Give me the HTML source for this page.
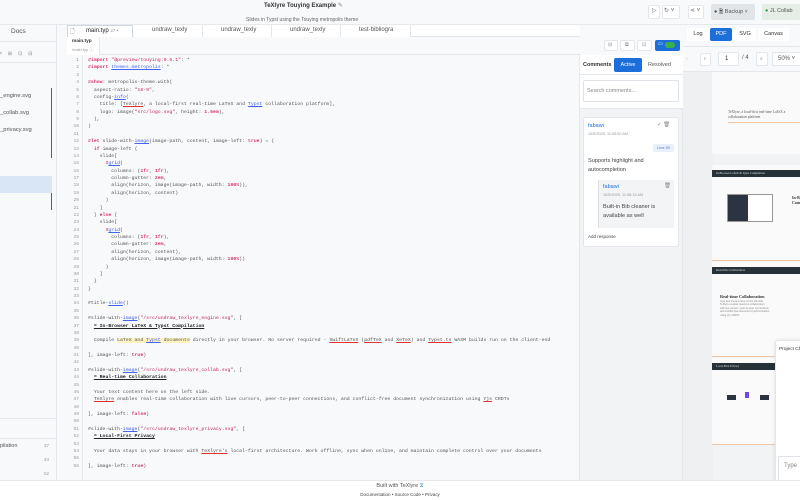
<!DOCTYPE html>
<html><head><meta charset="utf-8"><style>
*{box-sizing:border-box;margin:0;padding:0}
body{width:800px;height:500px;overflow:hidden;background:#f8f9fa;font-family:"Liberation Sans",sans-serif;color:#333;position:relative}
.a{position:absolute}
.code{font-family:"Liberation Mono",monospace;font-size:4.85px;color:#555;white-space:pre;line-height:7.38px}
.k{color:#d6336c;font-weight:bold}.s{color:#c2255c}.f{color:#4263eb;text-decoration:underline}.u{text-decoration:underline #e03131}
.h{color:#222;font-weight:bold;text-decoration:underline}
.ln{font-family:"Liberation Mono",monospace;font-size:4.6px;color:#999;line-height:7.38px;text-align:right;white-space:pre}
.btn{position:absolute;border:1px solid #e3e6ea;background:#fff;border-radius:2px}
.tab{position:absolute;top:25px;height:12px;font-size:6px;color:#555;border-right:1px solid #e3e6ea;padding:2px 0 0 18px;background:#fff}
.pg{position:absolute;left:712px;width:90px;background:#fafafa}
.bar{position:absolute;left:0;width:90px;height:7px;background:#263238}
.ic{position:absolute;font-size:5px;color:#888}
</style></head><body>
<div class="a" style="left:0;top:0;width:800px;height:25px;background:#f8f9fa;border-bottom:1px solid #e6e8eb"></div>
<div class="a" style="left:264px;top:2px;font-size:6px;font-weight:bold;color:#333">TeXlyre Touying Example <span style="color:#888;font-weight:normal">✎</span></div>
<div class="a" style="left:246px;top:17px;font-size:5px;color:#666">Slides in Typst using the Touying metropolis theme</div>
<div class="btn" style="left:648px;top:5px;width:12px;height:14px"></div>
<div class="a" style="left:652px;top:7px;font-size:6px;color:#666">▷</div>
<div class="btn" style="left:662px;top:5px;width:18px;height:14px"></div>
<div class="a" style="left:664px;top:7px;font-size:6px;color:#666">↻ ˅</div>
<div class="btn" style="left:688px;top:5px;width:16px;height:14px"></div>
<div class="a" style="left:690px;top:7px;font-size:6px;color:#666">⋖ ˅</div>
<div class="a" style="left:711px;top:4px;width:44px;height:16px;background:#e2e5e8;border-radius:2px;font-size:5.5px;color:#555;padding:4px 0 0 3px">● 🗎 Backup ˅</div>
<div class="a" style="left:762px;top:4px;width:40px;height:16px;background:#e4ede6;border-radius:2px;font-size:5.5px;color:#555;padding:4px 0 0 3px"><span style="color:#2f9e44">●</span> JL Collab</div>
<div class="a" style="left:0;top:25px;width:57px;height:455px;background:#f8f9fa;border-right:1px solid #e3e6ea"></div>
<div class="a" style="left:11px;top:28px;font-size:6.5px;color:#555">Docs</div>
<div class="a" style="left:0;top:41px;width:57px;border-top:1px solid #e3e6ea"></div>
<div class="a" style="left:0;top:51px;font-size:5px;color:#888;letter-spacing:6px">ᵇ⊞⊡⊟</div>
<div class="a" style="left:0;top:62px;width:57px;border-top:1px solid #e3e6ea"></div>
<div class="a" style="left:0;top:93px;font-size:5.8px;color:#555">_engine.svg</div>
<div class="a" style="left:0;top:110px;font-size:5.8px;color:#555">_collab.svg</div>
<div class="a" style="left:0;top:127px;font-size:5.8px;color:#555">_privacy.svg</div>
<div class="a" style="left:51px;top:88px;width:1px;height:70px;background:#3b5bdb"></div>
<div class="a" style="left:0;top:176px;width:52px;height:17px;background:#d8e6f5"></div>
<div class="a" style="left:51px;top:193px;width:1px;height:17px;background:#3b5bdb"></div>
<div class="a" style="left:0;top:418px;width:57px;border-top:1px solid #e3e6ea"></div>
<div class="a" style="left:0;top:438px;width:57px;border-top:1px solid #e3e6ea"></div>
<div class="a" style="left:0;top:443px;font-size:5.5px;color:#555">pilation</div>
<div class="a" style="left:44px;top:443px;font-size:4.5px;color:#999">37</div>
<div class="a" style="left:44px;top:457px;font-size:4.5px;color:#999">44</div>
<div class="a" style="left:44px;top:471px;font-size:4.5px;color:#999">52</div>
<div class="a" style="left:67px;top:25px;width:513px;height:12px;background:#fff;border-bottom:1px solid #e3e6ea"></div>
<div class="tab" style="left:67px;width:66px;border:1px solid #cfd8e3;border-bottom:none;color:#222">main.typ <span style="color:#999;font-size:4.5px">27 •</span></div>
<div class="tab" style="left:134px;width:69px">undraw_texly</div>
<div class="tab" style="left:203px;width:69px">undraw_texly</div>
<div class="tab" style="left:272px;width:69px">undraw_texly</div>
<div class="tab" style="left:341px;width:70px">test-bibliogra</div>
<div class="a" style="left:70px;top:27px;font-size:6px;color:#777">🗋</div>
<div class="a" style="left:67px;top:37px;width:513px;height:18px;background:#f8f9fa;border-bottom:1px solid #e3e6ea"></div>
<div class="a" style="left:67px;top:37px;width:33px;height:18px;background:#fff;border-right:1px solid #e3e6ea"></div>
<div class="a" style="left:72px;top:39px;font-size:4.8px;font-weight:bold;color:#333">main.typ</div>
<div class="a" style="left:72px;top:47px;font-size:4px;color:#999">/main.typ ⓘ</div>
<div class="btn" style="left:604px;top:40px;width:14px;height:11px"></div><div class="ic" style="left:608px;top:42px">⊟</div>
<div class="btn" style="left:620px;top:40px;width:15px;height:11px"></div><div class="ic" style="left:625px;top:42px">⧉</div>
<div class="btn" style="left:637px;top:40px;width:15px;height:11px"></div><div class="ic" style="left:642px;top:42px">⊡</div>
<div class="a" style="left:655px;top:40px;width:25px;height:11px;background:#1c6ed8;border-radius:2px"></div>
<div class="a" style="left:658px;top:41px;font-size:5px;color:#fff">▭</div>
<div class="a" style="left:665px;top:42px;width:10px;height:6px;background:#37b24d;border-radius:3px"></div>
<div class="a" style="left:67px;top:55px;width:513px;height:425px;background:#f8f9fa;border-right:1px solid #e3e6ea"></div>
<div class="a" style="left:82px;top:55px;width:1px;height:425px;background:#e3e6ea"></div>
<div class="a ln" style="left:68px;top:57px;width:11px">1
2
3
4
5
6
7
8
9
10
11
12
13
14
15
16
17
18
19
20
21
22
23
24
25
26
27
28
29
30
31
32
33
34
35
36
37
38
39
40
41
42
43
44
45
46
47
48
49
50
51
52
53
54
55
56</div>
<div class="a code" style="left:88px;top:57px"><span class="k">#import</span> <span class="s">"@preview/touying:0.6.1"</span>: *
<span class="k">#import</span> <span class="f">themes.metropolis</span>: *

<span class="k">#show</span>: metropolis-theme.with(
  aspect-ratio: <span class="s">"16-9"</span>,
  config-<span class="f">info</span>(
    title: [<span class="u">TeXlyre</span>, a local-first real-time LaTeX and <span class="f">Typst</span> collaboration platform],
    logo: image(<span class="s">"src/logo.svg"</span>, height: <span class="k">1.5em</span>),
  ),
)

<span class="k">#let</span> slide-with-<span class="f">image</span>(image-path, content, image-left: <span class="k">true</span>) = {
  <span class="k">if</span> image-left {
    slide[
      <span class="k">#</span><span class="f">grid</span>(
        columns: (<span class="k">1fr</span>, <span class="k">1fr</span>),
        column-gutter: <span class="k">2em</span>,
        align(horizon, image(image-path, width: <span class="k">100%</span>)),
        align(horizon, content)
      )
    ]
  } <span class="k">else</span> {
    slide[
      <span class="k">#</span><span class="f">grid</span>(
        columns: (<span class="k">1fr</span>, <span class="k">1fr</span>),
        column-gutter: <span class="k">2em</span>,
        align(horizon, content),
        align(horizon, image(image-path, width: <span class="k">100%</span>))
      )
    ]
  }
}

#title-<span class="f">slide</span>()

#slide-with-<span class="f">image</span>(<span class="s">"/src/undraw_texlyre_engine.svg"</span>, [
  <span class="h">= In-Browser LaTeX &amp; Typst Compilation</span>

  Compile <span style="background:#fff3bf">LaTeX and <span class="f">Typst</span> documents</span> directly in your browser. No server required - <span class="u">SwiftLaTeX</span> (<span class="u">pdfTeX</span> and <span class="u">XeTeX</span>) and <span class="u">Typst.ts</span> WASM builds run on the client-end

], image-left: <span class="k">true</span>)

#slide-with-<span class="f">image</span>(<span class="s">"/src/undraw_texlyre_collab.svg"</span>, [
  <span class="h">= Real-time Collaboration</span>

  Your text content here on the left side.
  <span class="u">TeXlyre</span> enables real-time collaboration with live cursors, peer-to-peer connections, and conflict-free document synchronization using <span class="u">Yjs</span> CRDTs

], image-left: <span class="k">false</span>)

#slide-with-<span class="f">image</span>(<span class="s">"/src/undraw_texlyre_privacy.svg"</span>, [
  <span class="h">= Local-First Privacy</span>

  Your data stays in your browser with <span class="u">TeXlyre's</span> local-first architecture. Work offline, sync when online, and maintain complete control over your documents

], image-left: <span class="k">true</span>)</div>
<div class="a" style="left:580px;top:55px;width:103px;height:425px;background:#f1f3f5;border-right:1px solid #e3e6ea"></div>
<div class="a" style="left:580px;top:55px;width:103px;height:20px;background:#fff;border-bottom:1px solid #e3e6ea"></div>
<div class="a" style="left:583px;top:62px;font-size:5.5px;font-weight:bold;color:#333">Comments</div>
<div class="a" style="left:614px;top:58px;width:28px;height:14px;background:#1c6ed8;border-radius:2px;color:#fff;font-size:5.5px;text-align:center;line-height:14px">Active</div>
<div class="a" style="left:648px;top:62px;font-size:5.5px;color:#555">Resolved</div>
<div class="a" style="left:580px;top:75px;width:103px;height:34px;background:#fff;border-bottom:1px solid #e3e6ea"></div>
<div class="a" style="left:583px;top:80px;width:96px;height:22px;border:1px solid #dee2e6;border-radius:2px;font-size:5.5px;color:#888;padding:7px 0 0 3px">Search comments...</div>
<div class="a" style="left:583px;top:117px;width:96px;height:130px;background:#fff;border:1px solid #e3e6ea;border-radius:3px"></div>
<div class="a" style="left:588px;top:123px;font-size:5.5px;color:#1c6ed8">fabawi</div>
<div class="a" style="left:657px;top:122px;font-size:5.5px;color:#888">✓ 🗑</div>
<div class="a" style="left:588px;top:132px;font-size:3.8px;color:#999">10/5/2025, 11:05:50 AM</div>
<div class="a" style="left:653px;top:144px;width:21px;height:8px;background:#e7f0fb;border-radius:2px;font-size:3.8px;color:#4a79c5;text-align:center;line-height:8px">Line 39</div>
<div class="a" style="left:588px;top:157px;font-size:5.6px;color:#444;line-height:8.5px">Supports highlight and<br>autocompletion</div>
<div class="a" style="left:598px;top:180px;width:76px;height:48px;background:#f3f4f6;border-left:1px solid #ddd;border-radius:2px"></div>
<div class="a" style="left:603px;top:184px;font-size:5.5px;color:#1c6ed8">fabawi</div>
<div class="a" style="left:664px;top:183px;font-size:5.5px;color:#888">🗑</div>
<div class="a" style="left:603px;top:193px;font-size:3.8px;color:#999">10/5/2025, 11:08:13 AM</div>
<div class="a" style="left:603px;top:203px;font-size:5.6px;color:#444;line-height:8.5px">Built-in Bib cleaner is<br>available as well</div>
<div class="a" style="left:588px;top:234px;font-size:4.5px;color:#444">Add response</div>
<div class="a" style="left:683px;top:25px;width:117px;height:455px;background:#f1f3f5"></div>
<div class="a" style="left:683px;top:25px;width:117px;height:22px;background:#f8f9fa;border-bottom:1px solid #e3e6ea"></div>
<div class="a" style="left:687px;top:28px;width:22px;height:13px;background:#fff;font-size:5.5px;text-align:center;line-height:13px">Log</div>
<div class="a" style="left:710px;top:28px;width:22px;height:13px;background:#1c6ed8;color:#fff;border-radius:2px;font-size:5.5px;text-align:center;line-height:13px">PDF</div>
<div class="a" style="left:734px;top:28px;width:22px;height:13px;background:#fff;font-size:5.5px;text-align:center;line-height:13px">SVG</div>
<div class="a" style="left:758px;top:28px;width:31px;height:13px;background:#fff;font-size:5.5px;text-align:center;line-height:13px">Canvas</div>
<div class="a" style="left:683px;top:47px;width:117px;height:25px;background:#f8f9fa;border-bottom:1px solid #e3e6ea"></div>
<div class="a" style="left:686px;top:56px;font-size:5.5px;color:#bbb">‹</div>
<div class="btn" style="left:700px;top:53px;width:11px;height:13px"></div>
<div class="a" style="left:704px;top:56px;font-size:5.5px;color:#555">›</div>
<div class="btn" style="left:718px;top:52px;width:21px;height:14px;font-size:6px;padding:3px 0 0 6px">1</div>
<div class="a" style="left:742px;top:55px;font-size:6px;color:#555">/ 4</div>
<div class="btn" style="left:756px;top:52px;width:12px;height:14px;font-size:5px;padding:3px 0 0 3px;color:#777">⌕</div>
<div class="btn" style="left:772px;top:52px;width:30px;height:14px;font-size:6px;padding:3px 0 0 5px;color:#555">50% ˅</div>
<div class="a" style="left:683px;top:72px;width:30px;height:408px;background:#eef0f2"></div>
<div class="pg" style="top:72px;height:82px"><div class="a" style="left:16px;top:38px;font-family:'Liberation Serif',serif;font-size:3.6px;color:#555;line-height:4.5px;white-space:nowrap">TeXlyre, a local-first real-time LaTeX a<br>collaboration platform</div><div class="a" style="left:16px;top:50px;width:80px;height:1px;background:#f0c8a8"></div></div>
<div class="pg" style="top:165px;height:96px;border-bottom:1px solid #f0c8a8"><div class="bar" style="top:5px"></div><div class="a" style="left:4px;top:5px;font-size:3px;color:#ddd;line-height:7px;font-family:'Liberation Serif',serif;white-space:nowrap">In-Browser LaTeX &amp; Typst Compilation</div><div class="a" style="left:15px;top:29px;width:46px;height:28px;border:1px solid #999;background:#fff"></div><div class="a" style="left:16px;top:30px;width:20px;height:26px;background:#2b3440"></div><div class="a" style="left:80px;top:30px;font-family:'Liberation Serif',serif;font-size:4px;font-weight:bold;line-height:5px">In-B<br>Com</div></div>
<div class="pg" style="top:262px;height:95px;border-bottom:1px solid #f0c8a8"><div class="bar" style="top:5px"></div><div class="a" style="left:4px;top:5px;font-size:3px;color:#ddd;line-height:7px;font-family:'Liberation Serif',serif">Real-time Collaboration</div><div class="a" style="left:8px;top:32px;font-family:'Liberation Serif',serif;font-size:4.3px;font-weight:bold;color:#333">Real-time Collaboration</div><div class="a" style="left:8px;top:38px;font-size:2.6px;color:#888;line-height:3.4px">Your text content here on the left side.<br>TeXlyre enables real-time collaboration<br>with live cursors, peer-to-peer connections<br>and conflict-free document synchronization<br>using Yjs CRDTs</div></div>
<div class="pg" style="top:358px;height:87px;border-bottom:1px solid #f0c8a8"><div class="bar" style="top:5px"></div><div class="a" style="left:4px;top:5px;font-size:3px;color:#ddd;line-height:7px;font-family:'Liberation Serif',serif">Local-First Privacy</div><div class="a" style="left:15px;top:37px;width:9px;height:5px;background:#2b3440"></div><div class="a" style="left:33px;top:34px;width:4px;height:6px;background:#7048e8"></div><div class="a" style="left:48px;top:37px;width:9px;height:5px;background:#2b3440"></div></div>
<div class="a" style="left:775px;top:340px;width:30px;height:156px;background:#fff;border:1px solid #e3e6ea;border-radius:3px;box-shadow:0 0 4px rgba(0,0,0,.1)"></div>
<div class="a" style="left:779px;top:347px;font-size:4.8px;color:#333;white-space:nowrap">Project Ch</div>
<div class="a" style="left:778px;top:456px;width:30px;height:36px;border:1px solid #dee2e6;border-radius:2px;font-size:6px;color:#888;padding:6px 0 0 5px">Type</div>
<div class="a" style="left:0;top:480px;width:800px;height:20px;background:#fff;border-top:1px solid #e6e8eb"></div>
<div class="a" style="left:0;top:483px;width:800px;text-align:center;font-size:5.5px;color:#555">Built with TeXlyre <span style="color:#2b8a9e">⧖</span></div>
<div class="a" style="left:0;top:492px;width:800px;text-align:center;font-size:4.5px;color:#444">Documentation • Source Code • Privacy</div>
</body></html>
